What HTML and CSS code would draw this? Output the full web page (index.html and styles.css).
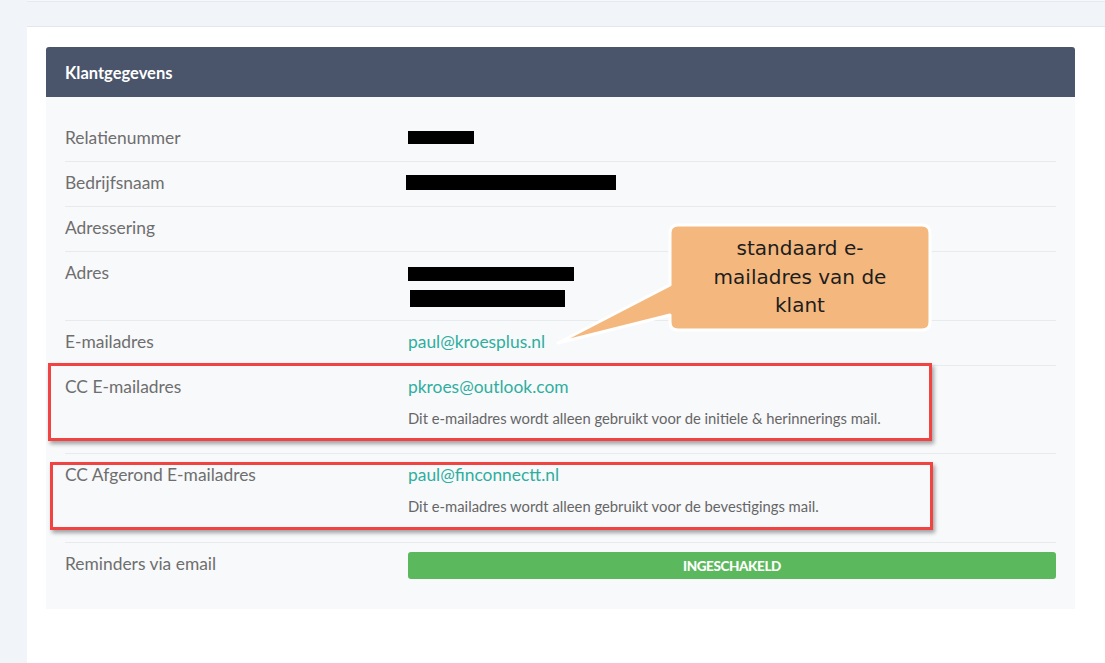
FILE: index.html
```html
<!DOCTYPE html>
<html lang="nl">
<head>
<meta charset="utf-8">
<title>Klantgegevens</title>
<link rel="stylesheet" href="styles.css">
</head>
<body>
<div class="page">
  <div class="topbar"></div>
  <div class="card">
    <div class="panel">
      <div class="panel-head">Klantgegevens</div>
      <div class="panel-body">
        <div class="row">
          <div class="label">Relatienummer</div>
          <div class="value"><div class="line"><span class="bar bar-rel"></span></div></div>
        </div>
        <div class="row">
          <div class="label">Bedrijfsnaam</div>
          <div class="value"><div class="line"><span class="bar bar-bedrijf"></span></div></div>
        </div>
        <div class="row">
          <div class="label">Adressering</div>
          <div class="value"></div>
        </div>
        <div class="row">
          <div class="label">Adres</div>
          <div class="value">
            <div class="line"><span class="bar bar-adres1"></span></div>
            <div class="line"><span class="bar bar-adres2"></span></div>
          </div>
        </div>
        <div class="row">
          <div class="label">E-mailadres</div>
          <div class="value"><span class="email">paul@kroesplus.nl</span></div>
        </div>
        <div class="row">
          <div class="label">CC E-mailadres</div>
          <div class="value">
            <span class="email">pkroes@outlook.com</span>
            <div class="help">Dit e-mailadres wordt alleen gebruikt voor de initiele &amp; herinnerings mail.</div>
          </div>
        </div>
        <div class="row">
          <div class="label">CC Afgerond E-mailadres</div>
          <div class="value">
            <span class="email">paul@finconnectt.nl</span>
            <div class="help help-last">Dit e-mailadres wordt alleen gebruikt voor de bevestigings mail.</div>
          </div>
        </div>
        <div class="row">
          <div class="label">Reminders via email</div>
          <div class="value"><div class="toggle-on">INGESCHAKELD</div></div>
        </div>
      </div>
    </div>
  </div>

  <div class="mark mark-cc"></div>
  <div class="mark mark-afgerond"></div>

  <svg class="callout-shape" width="400" height="140" viewBox="0 0 400 140" aria-hidden="true">
    <path d="M138,10 H382 Q390,10 390,18 V107 Q390,115 382,115 H138 Q130,115 130,107 V100 L18,128 L130,70 V18 Q130,10 138,10 Z" fill="#f4b87e" stroke="#ffffff" stroke-width="3" stroke-linejoin="round"/>
  </svg>
  <div class="callout-text">standaard e-<br>mailadres van de<br>klant</div>
</div>
</body>
</html>
```

FILE: styles.css
```css
* { box-sizing: border-box; }
html, body { margin: 0; padding: 0; }
body {
  background: #f1f4f8;
  font-family: Lato, "Open Sans", "Liberation Sans", sans-serif;
}
.page {
  position: relative;
  width: 1105px;
  height: 663px;
  overflow: hidden;
  background: #f1f4f8;
}
.topbar {
  margin-left: 27px;
  height: 2px;
  background: #f7f8fa;
  border-bottom: 1px solid #e7eaee;
  margin-bottom: 24px;
}
.card {
  margin-left: 27px;
  background: #ffffff;
  border-top: 1px solid #e3e6ea;
  padding: 20px 30px 80px 19px;
}
.panel {
  background: #f8f9fb;
  border-radius: 3px 3px 0 0;
}
.panel-head {
  height: 50px;
  display: flex;
  align-items: center;
  padding-left: 19px;
  padding-top: 1px;
  background: #4a556b;
  color: #ffffff;
  font-weight: 700;
  font-size: 16.5px;
  border-radius: 3px 3px 0 0;
}
.panel-body {
  padding: 20px 19px 19px;
}
.row {
  display: grid;
  grid-template-columns: 343px 1fr;
  padding: 9px 0 11px;
  border-top: 1px solid #e7ebee;
  line-height: 24px;
  font-size: 17.4px;
}
.row:first-child { border-top: none; }
.label { color: #6e6e6e; }
.line { height: 24px; display: flow-root; }
.bar { display: block; background: #000; }
.bar-rel { width: 66px; height: 13px; margin-top: 5px; }
.bar-bedrijf { width: 210px; height: 15px; margin-top: 4px; margin-left: -2px; }
.bar-adres1 { width: 166px; height: 14px; margin-top: 6px; }
.bar-adres2 { width: 155px; height: 17px; margin-top: 5px; margin-left: 2px; }
.email { color: #2fae9f; font-size: 17.4px; }
.help {
  font-size: 14.8px;
  line-height: 18px;
  color: #666666;
  margin: 10px 0 15px;
}
.help-last { margin-bottom: 16px; }
.toggle-on {
  height: 27px;
  background: #5cb85c;
  border-radius: 3px;
  color: #ffffff;
  font-weight: 900;
  font-size: 13.5px;
  letter-spacing: -0.4px;
  display: flex;
  align-items: center;
  justify-content: center;
}
.mark {
  position: absolute;
  border: 3px solid #f24343;
  box-shadow: 2px 3px 4px rgba(0, 0, 0, 0.35);
}
.mark-cc { left: 48px; top: 363px; width: 884px; height: 78px; }
.mark-afgerond { left: 50px; top: 462px; width: 883px; height: 68px; }
.callout-shape {
  position: absolute;
  left: 540px;
  top: 215px;
}
.callout-text {
  position: absolute;
  left: 670px;
  top: 234px;
  width: 260px;
  text-align: center;
  font-family: "DejaVu Sans", sans-serif;
  font-size: 20px;
  line-height: 28.5px;
  color: #1d1d1d;
}
```
